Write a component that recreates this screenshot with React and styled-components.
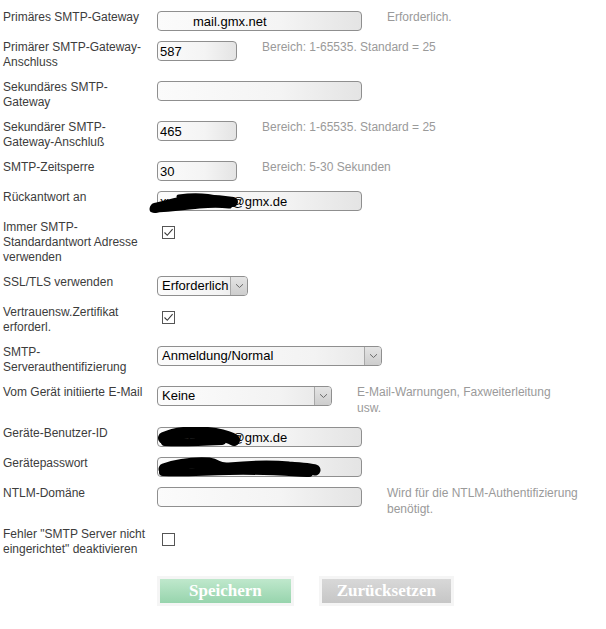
import React from "react"
import styled, { createGlobalStyle } from "styled-components"

const GlobalStyle = createGlobalStyle`
  body {
    margin: 0;
    background: #fff;
    font-family: "Liberation Sans", Arial, sans-serif;
  }
`

const Scribble = styled.svg`
  position: absolute;
  pointer-events: none;
`

const Chevron = () => (
  <svg width="9" height="6" viewBox="0 0 9 6">
    <path d="M1 1.2 L4.5 4.5 L8 1.2" fill="none" stroke="#6a6a6a" strokeWidth="1" />
  </svg>
)

const Check = () => (
  <svg width="11" height="11" viewBox="0 0 11 11">
    <path d="M1.5 5.5 L4.3 8.3 L9.6 2.2" fill="none" stroke="#3a3a3a" strokeWidth="1.1" />
  </svg>
)

// redaction scribbles drawn over the private fields
const Redaction = ({ kind }) => {
  if (kind === "reply") {
    return (
      <Scribble width="100" height="24" viewBox="0 0 100 24" style={{ left: -8, top: 0 }}>
        <path d="M6 17 C20 14 30 10 45 9 C60 8 72 9 84 11" stroke="#000" strokeWidth="10" strokeLinecap="round" fill="none" />
        <path d="M4 18 C18 18 32 16 50 14 C62 13 72 13 80 14" stroke="#000" strokeWidth="7" strokeLinecap="round" fill="none" />
        <path d="M30 6 C45 4 60 5 70 8" stroke="#000" strokeWidth="5" strokeLinecap="round" fill="none" />
      </Scribble>
    )
  }
  if (kind === "user") {
    return (
      <Scribble width="90" height="22" viewBox="0 0 90 22" style={{ left: 0, top: 0 }}>
        <path d="M7 11 C20 5 40 4 58 7 C68 9 74 11 77 13" stroke="#000" strokeWidth="12" strokeLinecap="round" fill="none" />
        <path d="M8 15 C25 16 45 15 65 14" stroke="#000" strokeWidth="8" strokeLinecap="round" fill="none" />
      </Scribble>
    )
  }
  return (
    <Scribble width="170" height="22" viewBox="0 0 170 22" style={{ left: 0, top: 0 }}>
      <path d="M7 12 C18 8 32 5 52 6 C62 7 58 12 72 11 C92 9 112 8 132 10 C146 11 155 12 158 13" stroke="#000" strokeWidth="11" strokeLinecap="round" fill="none" />
      <path d="M6 15 C30 16 50 14 72 14 C100 13 130 15 152 16" stroke="#000" strokeWidth="8" strokeLinecap="round" fill="none" />
    </Scribble>
  )
}

const rows = [
  { label: "Primäres SMTP-Gateway", kind: "text", width: 205, value: "mail.gmx.net", indent: 35, hint: "Erforderlich." },
  { label: "Primärer SMTP-Gateway-Anschluss", kind: "text", width: 80, value: "587", hint: "Bereich: 1-65535. Standard = 25" },
  { label: "Sekundäres SMTP-Gateway", kind: "text", width: 205, value: "" },
  { label: "Sekundärer SMTP-Gateway-Anschluß", kind: "text", width: 80, value: "465", hint: "Bereich: 1-65535. Standard = 25" },
  { label: "SMTP-Zeitsperre", kind: "text", width: 80, value: "30", hint: "Bereich: 5-30 Sekunden" },
  { label: "Rückantwort an", kind: "text", width: 205, value: "xxxxxxxxxxx@gmx.de", scribble: "reply" },
  { label: "Immer SMTP-Standardantwort Adresse verwenden", kind: "check", checked: true },
  { label: "SSL/TLS verwenden", kind: "select", width: 91, value: "Erforderlich" },
  { label: "Vertrauensw.Zertifikat erforderl.", kind: "check", checked: true },
  { label: "SMTP-Serverauthentifizierung", kind: "select", width: 225, value: "Anmeldung/Normal" },
  { label: "Vom Gerät initiierte E-Mail", kind: "select", width: 175, value: "Keine", hint: "E-Mail-Warnungen, Faxweiterleitung usw." },
  { label: "Geräte-Benutzer-ID", kind: "text", width: 205, value: "xxxxxxxxxxx@gmx.de", scribble: "user" },
  { label: "Gerätepasswort", kind: "text", width: 205, value: "", scribble: "password" },
  { label: "NTLM-Domäne", kind: "text", width: 205, value: "", hint: "Wird für die NTLM-Authentifizierung benötigt." },
  { label: "Fehler \"SMTP Server nicht eingerichtet\" deaktivieren", kind: "check", checked: false },
]

const Control = ({ row }) => {
  if (row.kind === "check") {
    return <CheckBox>{row.checked && <Check />}</CheckBox>
  }
  if (row.kind === "select") {
    return (
      <SelectBox $width={row.width}>
        <SelectValue>{row.value}</SelectValue>
        <SelectArrow>
          <Chevron />
        </SelectArrow>
      </SelectBox>
    )
  }
  return (
    <FieldWrap>
      <TextInput $width={row.width} $indent={row.indent} defaultValue={row.value} readOnly />
      {row.scribble && <Redaction kind={row.scribble} />}
    </FieldWrap>
  )
}

const App = () => {
  return (
    <Page>
      <GlobalStyle />
      <Form>
        {rows.map((row, i) => (
          <Row key={i}>
            <Label>{row.label}</Label>
            <Cell>
              <Control row={row} />
              {row.hint && <Hint>{row.hint}</Hint>}
            </Cell>
          </Row>
        ))}
      </Form>
      <Buttons>
        <ButtonFrame>
          <Button $tone="green">Speichern</Button>
        </ButtonFrame>
        <ButtonFrame>
          <Button $tone="gray">Zurücksetzen</Button>
        </ButtonFrame>
      </Buttons>
    </Page>
  )
}

const Page = styled.div`
  width: 606px;
  padding: 5px 0 0 3px;
  box-sizing: border-box;
`
const Form = styled.div`
  display: flex;
  flex-direction: column;
`
const Row = styled.div`
  display: flex;
  padding: 5px 0;
`
const Label = styled.div`
  width: 150px;
  flex-shrink: 0;
  margin-right: 4px;
  font-size: 12px;
  line-height: 15px;
  color: #3c3c3c;
`
const Cell = styled.div`
  display: flex;
  align-items: flex-start;
  gap: 25px;
  min-height: 20px;
`
const Hint = styled.div`
  max-width: 203px;
  font-size: 12px;
  line-height: 16px;
  margin-top: -1px;
  color: #9a9a9a;
`
const FieldWrap = styled.div`
  position: relative;
  margin: 1px 0 -1px;
  height: 20px;
`
const TextInput = styled.input`
  display: block;
  box-sizing: border-box;
  width: ${(p) => p.$width}px;
  height: 20px;
  margin: 0;
  padding: 0 2px 0 ${(p) => (p.$indent ? p.$indent : 2)}px;
  border: 1px solid #8f8f8f;
  border-radius: 4px;
  background: linear-gradient(to right, #fbfbfb 0%, #f4f4f4 60%, #e4e4e4 100%);
  font-family: "Liberation Sans", Arial, sans-serif;
  font-size: 13px;
  color: #000;
  outline: none;
`
const SelectBox = styled.div`
  display: flex;
  box-sizing: border-box;
  width: ${(p) => p.$width}px;
  height: 20px;
  margin: 1px 0 -1px;
  border: 1px solid #8f8f8f;
  border-radius: 4px;
  background: linear-gradient(to right, #fcfcfc 0%, #f3f3f3 70%, #e6e6e6 100%);
  overflow: hidden;
`
const SelectValue = styled.div`
  flex: 1;
  padding-left: 4px;
  font-size: 13px;
  line-height: 18px;
  color: #000;
  white-space: nowrap;
`
const SelectArrow = styled.div`
  width: 16px;
  display: flex;
  align-items: center;
  justify-content: center;
  border-left: 1px solid #a8a8a8;
  background: linear-gradient(to bottom, #e4e4e4, #cdcdcd);
`
const CheckBox = styled.div`
  box-sizing: border-box;
  width: 13px;
  height: 13px;
  margin: 6px 0 0 5px;
  border: 1px solid #555;
  background: #fff;
  display: flex;
  align-items: center;
  justify-content: center;
`
const Buttons = styled.div`
  display: flex;
  gap: 25px;
  margin: 14px 0 0 154px;
`
const ButtonFrame = styled.div`
  padding: 3px;
  background: #f5f5f5;
`
const Button = styled.div`
  height: 24px;
  padding: 0 ${(p) => (p.$tone === "green" ? 29 : 15)}px;
  display: flex;
  align-items: center;
  justify-content: center;
  font-family: "Liberation Serif", "Times New Roman", serif;
  font-weight: bold;
  font-size: 17px;
  color: #fff;
  background: ${(p) =>
    p.$tone === "green"
      ? "linear-gradient(to bottom, #bfe8cc, #97d4ad)"
      : "linear-gradient(to bottom, #d8d8d8, #c6c6c6)"};
`

export default App
